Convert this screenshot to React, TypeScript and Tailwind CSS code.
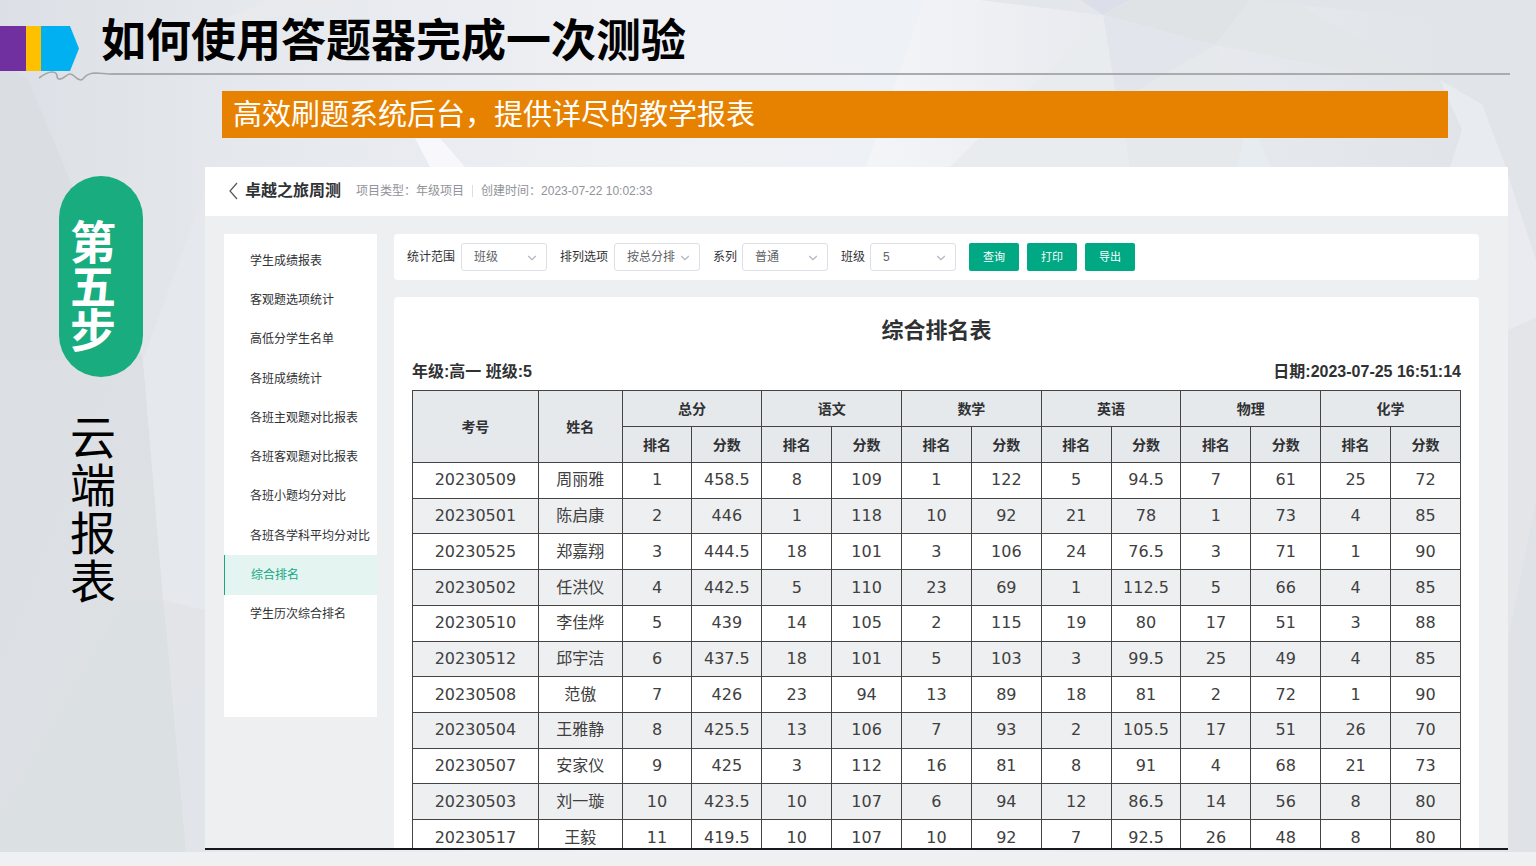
import { ChevronDown } from "lucide-react";

const MENU = [
  "学生成绩报表",
  "客观题选项统计",
  "高低分学生名单",
  "各班成绩统计",
  "各班主观题对比报表",
  "各班客观题对比报表",
  "各班小题均分对比",
  "各班各学科平均分对比",
  "综合排名",
  "学生历次综合排名",
];

const ACTIVE_MENU = "综合排名";

const FILTERS = [
  { id: "scope", label: "统计范围", value: "班级" },
  { id: "sort", label: "排列选项", value: "按总分排" },
  { id: "series", label: "系列", value: "普通" },
  { id: "class", label: "班级", value: "5" },
];

const ACTIONS = ["查询", "打印", "导出"];

const SUBJECTS = ["总分", "语文", "数学", "英语", "物理", "化学"];

type Row = { no: string; name: string; cells: number[] };

// cells: rank and score for each subject, in the order of SUBJECTS
const ROWS: Row[] = [
  { no: "20230509", name: "周丽雅", cells: [1, 458.5, 8, 109, 1, 122, 5, 94.5, 7, 61, 25, 72] },
  { no: "20230501", name: "陈启康", cells: [2, 446, 1, 118, 10, 92, 21, 78, 1, 73, 4, 85] },
  { no: "20230525", name: "郑嘉翔", cells: [3, 444.5, 18, 101, 3, 106, 24, 76.5, 3, 71, 1, 90] },
  { no: "20230502", name: "任洪仪", cells: [4, 442.5, 5, 110, 23, 69, 1, 112.5, 5, 66, 4, 85] },
  { no: "20230510", name: "李佳烨", cells: [5, 439, 14, 105, 2, 115, 19, 80, 17, 51, 3, 88] },
  { no: "20230512", name: "邱宇洁", cells: [6, 437.5, 18, 101, 5, 103, 3, 99.5, 25, 49, 4, 85] },
  { no: "20230508", name: "范傲", cells: [7, 426, 23, 94, 13, 89, 18, 81, 2, 72, 1, 90] },
  { no: "20230504", name: "王雅静", cells: [8, 425.5, 13, 106, 7, 93, 2, 105.5, 17, 51, 26, 70] },
  { no: "20230507", name: "安家仪", cells: [9, 425, 3, 112, 16, 81, 8, 91, 4, 68, 21, 73] },
  { no: "20230503", name: "刘一璇", cells: [10, 423.5, 10, 107, 6, 94, 12, 86.5, 14, 56, 8, 80] },
  { no: "20230517", name: "王毅", cells: [11, 419.5, 10, 107, 10, 92, 7, 92.5, 26, 48, 8, 80] },
];

/** Pale faceted backdrop behind the whole slide. */
function Backdrop() {
  return (
    <svg
      className="absolute inset-0 -z-10 size-full"
      viewBox="0 0 1536 866"
      preserveAspectRatio="none"
      aria-hidden
    >
      <defs>
        <linearGradient id="base" x1="0" x2="1" y1="0" y2="0">
          <stop offset="0" stopColor="#dcdfe6" />
          <stop offset="0.07" stopColor="#e0e4e8" />
          <stop offset="0.16" stopColor="#e5e8ed" />
          <stop offset="0.4" stopColor="#eef0f4" />
          <stop offset="0.6" stopColor="#eef1f5" />
          <stop offset="0.72" stopColor="#e9ebf0" />
          <stop offset="0.85" stopColor="#e4e7eb" />
          <stop offset="1" stopColor="#dfe3e7" />
        </linearGradient>
        <linearGradient id="ridge" x1="0" x2="1" y1="0" y2="0">
          <stop offset="0" stopColor="#f4f5f9" />
          <stop offset="0.3" stopColor="#f1f2f6" />
          <stop offset="1" stopColor="#e8eaef" />
        </linearGradient>
        <linearGradient id="slope" x1="0" x2="1" y1="0" y2="1">
          <stop offset="0" stopColor="#dcdfe4" />
          <stop offset="1" stopColor="#dde2e4" />
        </linearGradient>
      </defs>
      <rect width="1536" height="866" fill="url(#base)" />
      <polygon points="0,60 28,80 70,180 143,360 0,400" fill="#dadde2" />
      <polygon points="0,360 143,360 186,852 0,852" fill="url(#slope)" />
      <polygon points="125,600 163,600 186,852 0,852 0,820" fill="#dbe0e2" />
      <polygon points="143,360 205,190 205,620 163,600" fill="#e5e8ed" />
      <polygon points="163,600 205,610 205,700 174,700" fill="#e3e4e8" />
      <polygon points="174,700 205,680 205,852 186,852" fill="#e1e5ea" />
      <polygon points="185,35 360,0 270,0" fill="#e8eaee" />
      <polygon points="415,138 440,138 465,167 430,167" fill="#f8f8fc" />
      <polygon points="925,0 980,0 1103,15 1040,167 866,167" fill="url(#ridge)" />
      <polygon points="980,0 1080,0 1103,15" fill="#e3e6ea" />
      <polygon points="1080,0 1130,0 1103,15" fill="#dcdfe9" />
      <polygon points="1103,15 1130,0 1250,0 1215,45" fill="#dfe3e6" />
      <polygon points="1103,15 1215,45 1150,95 1115,90" fill="#e2e5eb" />
      <polygon points="1103,15 1115,90 1130,167 950,167" fill="#e9ecef" />
      <polygon points="1215,45 1250,0 1290,0 1480,110 1450,90" fill="#e2e6e8" />
      <polygon points="1215,45 1250,108 1270,167 1130,167 1120,100" fill="#e5e9ec" />
      <polygon points="1250,115 1270,167 1237,167" fill="#e7ecf0" />
      <polygon points="1250,0 1536,0 1536,260 1508,170 1480,100 1440,82 1450,20" fill="#e1e5e9" />
      <polygon points="1440,80 1482,104 1506,167 1450,167 1462,130" fill="#e8ebef" />
      <polygon points="1508,175 1536,260 1536,318 1508,330" fill="#eaebf0" />
      <polygon points="1508,330 1536,318 1536,500 1508,640" fill="#e3e5e9" />
      <polygon points="1508,640 1536,500 1536,852 1508,852" fill="#dfe3e8" />
    </svg>
  );
}

function SlideHeader() {
  return (
    <header className="h-[91px] shrink-0">
      <div className="flex h-[71px] items-end">
        <div className="flex h-[45px]" aria-hidden>
          <span className="w-[26px] bg-[#7030a0]" />
          <span className="w-[15px] bg-[#ffc000]" />
          <svg width="38" height="45" viewBox="0 0 38 45">
            <path d="M0 0H29L38 22.5L29 45H0Z" fill="#00b0f0" />
          </svg>
        </div>
        <h1 className="ml-[22px] text-[45px] leading-[58px] font-bold whitespace-nowrap text-black">
          如何使用答题器完成一次测验
        </h1>
      </div>
      <div className="mr-[26px] ml-[38px] flex" aria-hidden>
        <svg width="72" height="12" viewBox="0 0 72 12" fill="none">
          <path
            d="M1 7C5 4 9 1 14 1C22 1 17 8 21 8C26 9 28 3 32 3C37 3 37 9 43 9C47 8 46 2 58 2L72 3"
            stroke="#a3a5a8"
            strokeWidth="1.6"
          />
        </svg>
        <span className="mt-[2px] h-[2px] flex-1 bg-[#a9abad]" />
      </div>
    </header>
  );
}

function StepAside() {
  return (
    <aside className="w-[205px] shrink-0 pt-[9px] pl-[59px] text-[46px]">
      <div className="flex h-[201px] w-[84px] items-center rounded-full bg-[#18ac7f] pt-5 pl-[11px]">
        <p className="w-[46px] leading-[44px] font-bold break-all text-white">第五步</p>
      </div>
      <p className="mt-[37px] ml-[11px] w-[46px] leading-[48px] break-all text-black">云端报表</p>
    </aside>
  );
}

function ProjectBar() {
  return (
    <div className="flex h-[49px] shrink-0 items-center bg-white pb-[2px] pl-5 text-xs text-[#909399]">
      <button type="button" aria-label="返回" className="text-[#555]">
        <svg width="16" height="18" viewBox="0 0 16 18" fill="none" stroke="currentColor">
          <path d="M12 1L5 9L12 17" strokeWidth="1.2" />
        </svg>
      </button>
      <h2 className="ml-1 text-base font-bold text-[#303133]">卓越之旅周测</h2>
      <span className="ml-[15px]">项目类型：年级项目</span>
      <span className="mx-2 h-3 w-px bg-[#dcdfe6]" />
      <span>创建时间：2023-07-22 10:02:33</span>
    </div>
  );
}

function SideMenu() {
  return (
    <nav className="h-[483px] w-[153px] shrink-0 bg-white pt-[7px]">
      <ul className="grid h-[393px] grid-rows-10 text-xs whitespace-nowrap">
        {MENU.map((item) => (
          <li key={item} className="grid">
            <a
              href="#"
              className={
                item === ACTIVE_MENU
                  ? "flex items-center border-l border-[#12a983] bg-[#e4f4f0] pl-[26px] text-[#12a983]"
                  : "flex items-center pl-[26px] text-[#303133]"
              }
            >
              {item}
            </a>
          </li>
        ))}
      </ul>
    </nav>
  );
}

function FilterBar() {
  return (
    <form className="flex h-[46px] shrink-0 items-center rounded bg-white pl-[13px] text-xs">
      {FILTERS.map((f) => (
        <div key={f.id} className="mr-[13px] flex items-center gap-1">
          <label
            htmlFor={f.id}
            className={f.label.length > 2 ? "w-[50px] text-[#303133]" : "w-[25px] text-[#303133]"}
          >
            {f.label}
          </label>
          <div className="relative">
            <select
              id={f.id}
              defaultValue={f.value}
              className="h-7 w-[86px] appearance-none rounded-[3px] border border-[#dcdfe6] bg-white pl-3 text-[#606266]"
            >
              <option>{f.value}</option>
            </select>
            <ChevronDown
              className="pointer-events-none absolute top-2 right-2 size-3.5 text-[#b4b8c0]"
              strokeWidth={2}
              aria-hidden
            />
          </div>
        </div>
      ))}
      <div className="flex gap-2">
        {ACTIONS.map((a) => (
          <button
            key={a}
            type="button"
            className="h-7 w-[50px] rounded-[2px] bg-[#00a984] text-[11px] text-white"
          >
            {a}
          </button>
        ))}
      </div>
    </form>
  );
}

function RankTable() {
  return (
    <table className="mt-[6px] h-[466px] w-full table-fixed border-collapse text-center font-['DejaVu_Sans','Noto_Sans_CJK_SC',sans-serif] text-base leading-6 text-[#404040] [&_td]:border [&_td]:border-[#444] [&_th]:border [&_th]:border-[#444]">
      <colgroup>
        <col className="w-[12%]" />
        <col className="w-[8%]" />
        {SUBJECTS.map((s) => (
          <col key={s} span={2} />
        ))}
      </colgroup>
      <thead className="bg-[#e6e9ec] text-sm text-[#303133]">
        <tr className="h-9">
          <th rowSpan={2}>考号</th>
          <th rowSpan={2}>姓名</th>
          {SUBJECTS.map((s) => (
            <th key={s} colSpan={2}>
              {s}
            </th>
          ))}
        </tr>
        <tr className="h-9">
          {SUBJECTS.flatMap((s) => [
            <th key={`${s}-rank`}>排名</th>,
            <th key={`${s}-score`}>分数</th>,
          ])}
        </tr>
      </thead>
      <tbody>
        {ROWS.map((row) => (
          <tr key={row.no} className="even:bg-[#eeeff1]">
            <td>{row.no}</td>
            <td>{row.name}</td>
            {row.cells.map((v, i) => (
              <td key={i}>{v}</td>
            ))}
          </tr>
        ))}
      </tbody>
    </table>
  );
}

function Report() {
  return (
    <section className="min-h-0 flex-1 overflow-hidden rounded-t bg-white px-[18px] pt-[17px] text-[#303133]">
      <h3 className="text-center text-[22px] leading-[34px] font-bold">综合排名表</h3>
      <div className="mt-3 flex justify-between text-base leading-6 font-bold">
        <span>年级:高一 班级:5</span>
        <span>日期:2023-07-25 16:51:14</span>
      </div>
      <RankTable />
    </section>
  );
}

export default function App() {
  return (
    <div className="relative isolate flex h-screen flex-col overflow-hidden font-['Liberation_Sans','Noto_Sans_CJK_SC',sans-serif]">
      <Backdrop />
      <SlideHeader />
      <p className="mr-[88px] ml-[222px] h-[47px] shrink-0 bg-[#e78200] pl-[11px] text-[29px] leading-[48px] text-white">
        高效刷题系统后台，提供详尽的教学报表
      </p>
      <div className="mt-[29px] mb-[2px] flex min-h-0 flex-1">
        <StepAside />
        <main className="mr-7 flex min-w-0 flex-1 flex-col border-b-2 border-[#15181c] bg-[#eeeff1]">
          <ProjectBar />
          <div className="flex min-h-0 flex-1 gap-[17px] pt-[18px] pr-[29px] pl-[19px]">
            <SideMenu />
            <div className="flex min-w-0 flex-1 flex-col gap-[17px]">
              <FilterBar />
              <Report />
            </div>
          </div>
        </main>
      </div>
      <footer className="h-[14px] shrink-0 bg-[#eff0f2]" />
    </div>
  );
}
